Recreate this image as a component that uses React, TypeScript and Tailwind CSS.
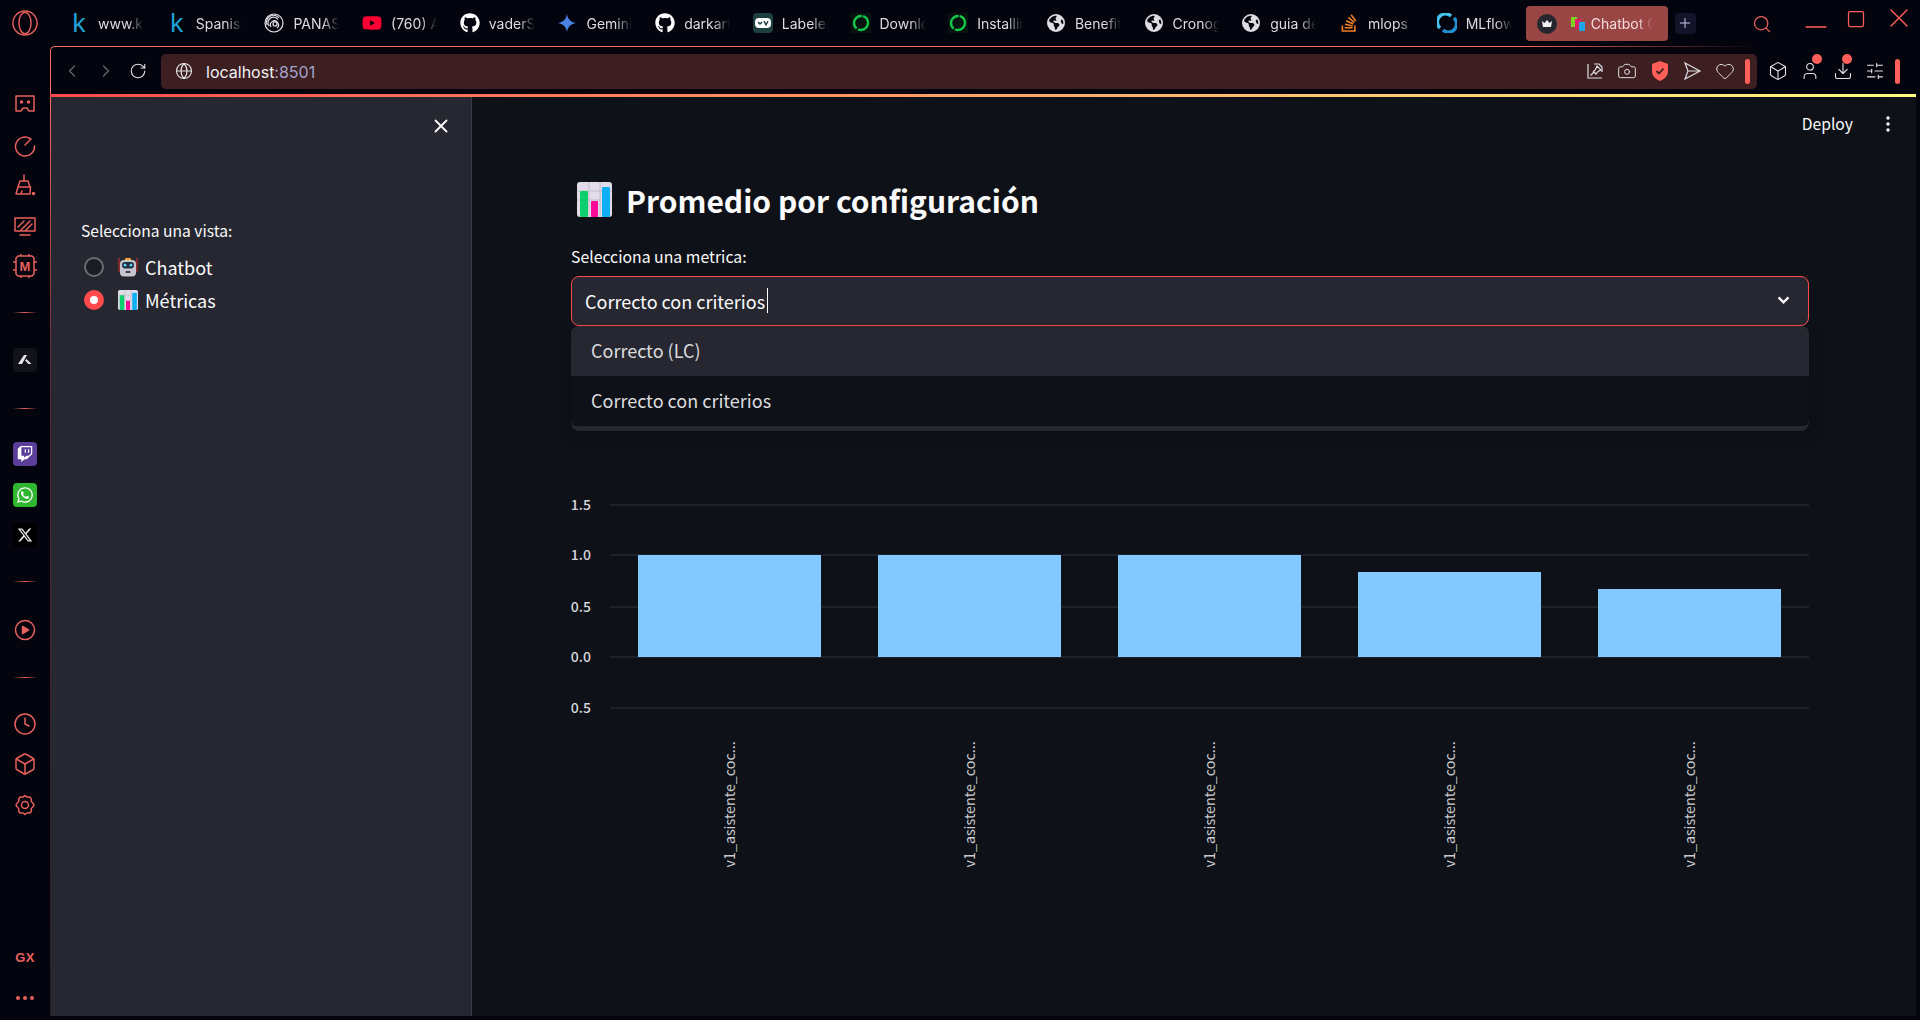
import type { ReactNode } from 'react';
import { Box, Camera, ChevronLeft, ChevronRight, Clock, Download, Globe, Heart, Minus, Plus, RotateCw, Search, SlidersHorizontal, Square, User, X } from 'lucide-react';
import { FaGithub, FaEarthAmericas, FaStackOverflow, FaTwitch, FaWhatsapp, FaXTwitter, FaYoutube } from 'react-icons/fa6';

const RED = '#e8605c';

function KaggleK() {
  return <span className="text-[26px] leading-5 font-medium text-[#20a3d8] [font-family:'Liberation_Sans',sans-serif]">k</span>;
}

function SpiralIcon() {
  return (
    <svg viewBox="0 0 20 20" className="w-5 h-5" fill="none" stroke="#e4e4e8" strokeWidth="1.2">
      <circle cx="10" cy="10" r="9" />
      <path d="M3 12a7 7 0 0 1 12-7M5 13a5.500 5.500 0 0 1 9-6.500M7 14a4 4 0 1 1 6 1" />
      <circle cx="11" cy="11" r="2" />
    </svg>
  );
}

function GeminiStar() {
  return (
    <svg viewBox="0 0 20 20" className="w-5 h-5">
      <path d="M10 1c.8 5 3.500 8 9 9-5.500 1-8.200 4-9 9-.8-5-3.500-8-9-9 5.500-1 8.200-4 9-9z" fill="#4a80e0" />
    </svg>
  );
}

function LabelIcon() {
  return (
    <div className="w-5 h-5 rounded-sm bg-[#1d3f3e] flex items-center justify-center">
      <svg viewBox="0 0 16 10" className="w-4 h-[10px]">
        <rect width="16" height="10" rx="4" fill="#fff" />
        <path d="M3 4l2 2 2-2M9 3l2 4 2-4" fill="none" stroke="#1d3f3e" strokeWidth="1.400" />
      </svg>
    </div>
  );
}

function Ring() {
  return (
    <div className="w-5 h-5 bg-[#07130f] flex items-center justify-center">
      <svg viewBox="0 0 20 20" className="w-5 h-5" fill="none">
        <circle cx="10" cy="10" r="7" stroke="#12c74a" strokeWidth="2.400" strokeDasharray="14 1.500 18 1" />
      </svg>
    </div>
  );
}

function MlflowIcon() {
  return (
    <svg viewBox="0 0 20 20" className="w-5 h-5" fill="none" strokeWidth="3.400">
      <path d="M3 15A8 8 0 0 1 14 3" stroke="#43c3ea" />
      <path d="M17 5a8 8 0 0 1-11 12" stroke="#1f8fd0" />
    </svg>
  );
}

function ChartEmoji({ className }: { className: string }) {
  return (
    <svg viewBox="0 0 35 35" className={className}>
      <rect width="35" height="35" rx="3" fill="#e2dbe8" />
      <path d="M0 9h35M0 18h35M12 0v35M23 0v35" stroke="#c2bccb" strokeWidth="1" />
      <rect x="3" y="9" width="8" height="26" rx="1" fill="#0bd06d" />
      <rect x="14" y="19" width="7" height="16" rx="1" fill="#fb0a9a" />
      <rect x="25" y="5" width="8" height="30" rx="1" fill="#0db0f4" />
    </svg>
  );
}

function RobotEmoji() {
  return (
    <svg viewBox="0 0 20 20" className="w-5 h-5">
      <path d="M1 1v14M19 1v14" stroke="#d8312f" strokeWidth="1" />
      <rect x="7" y="1" width="6" height="3" rx="1" fill="#f4a935" />
      <rect x="2" y="3" width="16" height="16.500" rx="4" fill="#c9c5cf" />
      <rect x="4" y="5" width="12" height="6.500" rx="3" fill="#20303f" />
      <circle cx="7" cy="8.200" r="1.400" fill="#5fd0f5" />
      <circle cx="13" cy="8.200" r="1.400" fill="#5fd0f5" />
      <rect x="7.500" y="14" width="5" height="2" rx="1" fill="#3a3a44" />
    </svg>
  );
}

const tabs: { icon: ReactNode; label: string }[] = [
  { icon: <KaggleK />, label: 'www.kaggle' },
  { icon: <KaggleK />, label: 'Spanish' },
  { icon: <SpiralIcon />, label: 'PANAS' },
  { icon: <FaYoutube className="w-5 h-5 text-[#ff0033]" />, label: '(760) A' },
  { icon: <FaGithub className="w-5 h-5 text-white" />, label: 'vaderSent' },
  { icon: <GeminiStar />, label: 'Gemini' },
  { icon: <FaGithub className="w-5 h-5 text-white" />, label: 'darkarts' },
  { icon: <LabelIcon />, label: 'Labeled' },
  { icon: <Ring />, label: 'Download' },
  { icon: <Ring />, label: 'Installing' },
  { icon: <FaEarthAmericas className="w-[18px] h-[18px] text-[#dedee2]" />, label: 'Benefits' },
  { icon: <FaEarthAmericas className="w-[18px] h-[18px] text-[#dedee2]" />, label: 'Cronogr' },
  { icon: <FaEarthAmericas className="w-[18px] h-[18px] text-[#dedee2]" />, label: 'guia de' },
  { icon: <FaStackOverflow className="w-5 h-5 text-[#f48024]" />, label: 'mlops' },
  { icon: <MlflowIcon />, label: 'MLflow' },
];

function Tab({ icon, label }: { icon: ReactNode; label: string }) {
  return (
    <div className="w-[97.7px] shrink-0 flex items-center gap-[9px] px-[10px]">
      <div className="w-5 h-5 shrink-0 flex items-center justify-center">{icon}</div>
      <span className="w-[46px] overflow-hidden whitespace-nowrap text-[14px] text-[#dcdce0] [mask-image:linear-gradient(to_right,black_65%,transparent)]">{label}</span>
    </div>
  );
}

function RailGlyph({ children }: { children: ReactNode }) {
  return (
    <svg viewBox="0 0 24 24" className="w-6 h-6" fill="none" stroke={RED} strokeWidth="1.500" strokeLinejoin="round" strokeLinecap="round">
      {children}
    </svg>
  );
}

function RailSlot({ h, children }: { h: string; children?: ReactNode }) {
  return <div className={`${h} w-full flex items-center justify-center shrink-0`}>{children}</div>;
}

function RailDivider() {
  return <div className="w-6 h-px bg-[linear-gradient(to_right,transparent,#e8605c,transparent)]" />;
}

function Rail() {
  return (
    <aside className="w-[50px] shrink-0 flex flex-col pt-[38px] pb-[2px]">
      <RailSlot h="h-[40.5px]">
        <RailGlyph>
          <path d="M3 4h18v15h-5l-2-3h-4l-2 3H3z" />
          <circle cx="8.500" cy="10" r="1" fill={RED} />
          <circle cx="15.500" cy="10" r="1" fill={RED} />
        </RailGlyph>
      </RailSlot>
      <RailSlot h="h-[40.5px]">
        <RailGlyph>
          <path d="M17 5.500A9.500 9.500 0 1 0 21.500 13" />
          <path d="M12 12l6-6" />
        </RailGlyph>
      </RailSlot>
      <RailSlot h="h-[40.5px]">
        <RailGlyph>
          <path d="M11 2v6M7 8h8l2 6H5zM5 14l-2 7h14l.5-7M8 21l1-3" />
          <circle cx="20.500" cy="20.500" r="1" fill={RED} />
        </RailGlyph>
      </RailSlot>
      <RailSlot h="h-[40.5px]">
        <RailGlyph>
          <path d="M2 4h20v13H2zM7 21h10M5 13l6-6M8 16l9-9M13 16l6-6" />
        </RailGlyph>
      </RailSlot>
      <RailSlot h="h-[40.5px]">
        <svg viewBox="0 0 24 24" className="w-6 h-6" fill="none" stroke={RED} strokeWidth="1.500">
          <path d="M5 2h14l2 2v16l-2 2H5l-2-2V4z" />
          <path d="M8 0v2M16 0v2M0 8h3M0 16h3M21 8h3M21 16h3M8 22v2M16 22v2" />
          <text x="12" y="17" textAnchor="middle" fontSize="13" fontWeight="700" fill={RED} stroke="none" fontFamily="'Liberation Sans', sans-serif">M</text>
        </svg>
      </RailSlot>
      <RailSlot h="h-[51.5px]"><RailDivider /></RailSlot>
      <RailSlot h="h-[44px]">
        <div className="w-6 h-[24px] rounded bg-[#12121b] flex items-center justify-center">
          <svg viewBox="0 0 16 16" className="w-4 h-4" fill="#e4e4e8">
            <path d="M7 3h3l-5 9H1zM9.500 7l5 5h-3l-3.500-3.500z" />
          </svg>
        </div>
      </RailSlot>
      <RailSlot h="h-[52px]"><RailDivider /></RailSlot>
      <RailSlot h="h-[40.5px]">
        <div className="w-6 h-6 rounded bg-[#5a3e9a] flex items-center justify-center">
          <FaTwitch className="w-4 h-4 text-white" />
        </div>
      </RailSlot>
      <RailSlot h="h-[40.5px]">
        <div className="w-6 h-6 rounded bg-[#2fb52f] flex items-center justify-center">
          <FaWhatsapp className="w-[18px] h-[18px] text-white" />
        </div>
      </RailSlot>
      <RailSlot h="h-[40.5px]">
        <div className="w-6 h-6 rounded bg-black flex items-center justify-center">
          <FaXTwitter className="w-4 h-4 text-[#e4e4e8]" />
        </div>
      </RailSlot>
      <RailSlot h="h-[52px]"><RailDivider /></RailSlot>
      <RailSlot h="h-[44px]">
        <RailGlyph>
          <circle cx="12" cy="12" r="9.500" />
          <path d="M9.500 8.500l6 3.500-6 3.500z" fill={RED} />
        </RailGlyph>
      </RailSlot>
      <RailSlot h="h-[52px]"><RailDivider /></RailSlot>
      <RailSlot h="h-[40.5px]"><Clock className="w-6 h-6 text-[#e8605c]" strokeWidth={1.5} /></RailSlot>
      <RailSlot h="h-[40.5px]"><Box className="w-6 h-6 text-[#e8605c]" strokeWidth={1.5} /></RailSlot>
      <RailSlot h="h-[40.5px]">
        <RailGlyph>
          <path d="M12 2.500c1.500 1.800 3 2 5 1.500 1 .8 1.500 3 1.300 4.500 1.300 1 2.200 2.200 2.700 3.500-.5 1.300-1.400 2.500-2.700 3.500.2 1.500-.3 3.700-1.300 4.500-2-.5-3.500-.3-5 1.500-1.500-1.800-3-2-5-1.500-1-.8-1.500-3-1.300-4.500C4.400 14.500 3.500 13.300 3 12c.5-1.300 1.400-2.500 2.700-3.500C5.500 7 6 4.800 7 4c2 .5 3.500.3 5-1.500z" />
          <circle cx="12" cy="12" r="3.500" />
        </RailGlyph>
      </RailSlot>
      <div className="flex-1" />
      <RailSlot h="h-10">
        <span className="text-[13px] font-bold tracking-wide text-[#e8605c] [font-family:'Liberation_Sans',sans-serif]">GX</span>
      </RailSlot>
      <RailSlot h="h-10">
        <div className="flex gap-[3px]">
          <div className="w-1 h-1 rounded-full bg-[#e8605c]" />
          <div className="w-1 h-1 rounded-full bg-[#e8605c]" />
          <div className="w-1 h-1 rounded-full bg-[#e8605c]" />
        </div>
      </RailSlot>
    </aside>
  );
}

function TabStrip() {
  return (
    <header className="h-[46px] shrink-0 flex items-center [font-family:Inter,sans-serif]">
      <div className="w-[59px] shrink-0 flex items-center pl-[12px]">
        <svg viewBox="0 0 28 28" className="w-[26px] h-[26px]" fill="none" stroke={RED} strokeWidth="1.500">
          <ellipse cx="14" cy="14" rx="13" ry="13" />
          <ellipse cx="14" cy="14" rx="6.500" ry="11.500" />
        </svg>
      </div>
      {tabs.map((t, i) => <Tab key={i} icon={t.icon} label={t.label} />)}
      <div className="ml-[1.500px] w-[142px] h-[35px] mt-[1px] shrink-0 rounded-[4px] bg-[#9a4645] flex items-center pl-[11px]">
        <div className="w-5 h-5 shrink-0 rounded-full bg-[#26262f] flex items-center justify-center">
          <svg viewBox="0 0 12 12" className="w-3 h-3" fill="#f2f2f4"><path d="M1 3l2.500 2L6 2l2.500 3L11 3l-1 6H2z" /></svg>
        </div>
        <div className="ml-[14px] w-[14px] h-[14px] shrink-0"><ChartTabIcon /></div>
        <span className="ml-[6px] w-[62px] overflow-hidden whitespace-nowrap text-[14px] text-[#f2dcdb] [mask-image:linear-gradient(to_right,black_75%,transparent)]">Chatbot Cocina</span>
      </div>
      <div className="ml-[7px] w-[21px] h-[21px] rounded bg-[#13132a] flex items-center justify-center">
        <Plus className="w-4 h-4 text-[#c9c9ef]" strokeWidth={1.5} />
      </div>
      <Search className="ml-[56px] mt-[2px] w-5 h-5 text-[#e8605c]" strokeWidth={1.5} />
      <Minus className="ml-[27px] mt-[8px] w-[34px] h-[34px] text-[#ff5f58]" strokeWidth={1} />
      <Square className="ml-[13px] -mt-[8px] w-5 h-5 text-[#ff5f58]" strokeWidth={1.5} />
      <X className="ml-[17px] -mt-[10px] w-8 h-8 text-[#ff5f58]" strokeWidth={1} />
    </header>
  );
}

function ChartTabIcon() {
  return (
    <svg viewBox="0 0 14 14" className="w-[14px] h-[14px]">
      <rect x="0" y="0" width="6" height="10" fill="#7ed321" />
      <rect x="4" y="2" width="6" height="10" fill="#e01b6a" />
      <rect x="8" y="5" width="6" height="9" fill="#1ea7e8" />
    </svg>
  );
}

function Toolbar() {
  return (
    <div className="relative h-[48px] pt-[1px] shrink-0 flex items-center border-t border-l border-[#ff6a63] rounded-tl-[5px] [font-family:Inter,sans-serif]">
      <div className="absolute -top-px right-0 w-[400px] h-px bg-[linear-gradient(to_right,transparent,#04040f_60%)]" />
      <ChevronLeft className="ml-[11px] w-5 h-5 text-[#66666e]" strokeWidth={1.5} />
      <ChevronRight className="ml-[14px] w-5 h-5 text-[#66666e]" strokeWidth={1.5} />
      <RotateCw className="ml-[13px] w-[18px] h-[18px] text-[#dedee2]" strokeWidth={1.5} />
      <div className="ml-[14px] w-[1596px] h-[35px] rounded-[5px] bg-[#3d1f21] flex items-center pl-[14px] pr-[7px]">
        <Globe className="w-[18px] h-[18px] text-[#e4e4e8]" strokeWidth={1.5} />
        <span className="ml-[13px] pt-[1px] text-[16px] text-[#f2f2f4]">localhost<span className="text-[#a3a3cc]">:8501</span></span>
        <div className="flex-1" />
        <svg viewBox="0 0 20 20" className="w-5 h-5" fill="none" stroke="#dedee2" strokeWidth="1.200">
          <path d="M3 3v14h14M9 3h5l3 3v5" />
          <path d="M12 5l4 4-3 1.500-2 2.500-2.500-2.500 2-2zM9 11l-3.500 3.500" />
        </svg>
        <Camera className="ml-[12px] w-5 h-5 text-[#dedee2]" strokeWidth={1.2} />
        <svg viewBox="0 0 20 22" className="ml-[13px] w-5 h-[22px]">
          <path d="M10 1l8 3v7c0 5-3.500 8-8 10-4.500-2-8-5-8-10V4z" fill="#ff5f58" />
          <path d="M6.500 11l2.500 2.500 4.500-5" fill="none" stroke="#3d1f21" strokeWidth="1.800" />
        </svg>
        <svg viewBox="0 0 20 20" className="ml-[12px] w-5 h-5" fill="none" stroke="#dedee2" strokeWidth="1.200">
          <path d="M3 2l15 8-15 8 3-8zM6 10h12" />
        </svg>
        <Heart className="ml-[13px] w-5 h-5 text-[#dedee2]" strokeWidth={1.2} />
        <div className="ml-[10px] w-[5px] h-[25px] rounded-sm bg-[#ff5f58]" />
      </div>
      <Box className="ml-[11px] w-5 h-5 text-[#e4e4e8]" strokeWidth={1.3} />
      <div className="relative ml-[12px]">
        <User className="w-5 h-5 text-[#e4e4e8]" strokeWidth={1.3} />
        <div className="absolute -top-[7px] left-[12px] w-[10px] h-[10px] rounded-full bg-[#ff5f58]" />
      </div>
      <div className="relative ml-[13px]">
        <Download className="w-5 h-5 text-[#e4e4e8]" strokeWidth={1.3} />
        <div className="absolute -top-[7px] left-[9px] w-[10px] h-[10px] rounded-full bg-[#ff5f58]" />
      </div>
      <SlidersHorizontal className="ml-[12px] w-5 h-5 text-[#e4e4e8]" strokeWidth={1.3} />
      <div className="ml-[10px] w-[5px] h-[25px] rounded-sm bg-[#ff5f58]" />
    </div>
  );
}

function Sidebar() {
  return (
    <aside className="w-[421px] shrink-0 bg-[#262730] border-r border-[#3a3b45] [font-family:'Noto_Sans_CJK_SC',sans-serif] text-[#fafafa]">
      <div className="flex justify-end pt-[18px] pr-[19px] h-[40px]">
        <X className="w-[22px] h-[22px] text-[#fafafa]" strokeWidth={2} />
      </div>
      <p className="mt-[81px] ml-[30px] text-[15.6px] leading-[24px]">Selecciona una vista:</p>
      <div className="mt-[15px] ml-[33px] flex flex-col gap-[13px]">
        <div className="flex items-center h-[20px]">
          <div className="w-5 h-5 rounded-full border-2 border-[#6b6c74] bg-[#1c1d24]" />
          <div className="ml-[14px]"><RobotEmoji /></div>
          <span className="ml-[7px] text-[18px] leading-[24px]">Chatbot</span>
        </div>
        <div className="flex items-center h-[20px]">
          <div className="w-5 h-5 rounded-full bg-[#ff4b4b] flex items-center justify-center">
            <div className="w-2 h-2 rounded-full bg-white" />
          </div>
          <div className="ml-[14px]"><ChartEmoji className="w-5 h-5" /></div>
          <span className="ml-[7px] text-[18px] leading-[24px]">Métricas</span>
        </div>
      </div>
    </aside>
  );
}

const gridLines = [
  { label: '1.5', y: 15 },
  { label: '1.0', y: 65 },
  { label: '0.5', y: 117 },
  { label: '0.0', y: 167 },
  { label: '0.5', y: 218 },
];

const bars = [
  { x: 67, top: 65 },
  { x: 307, top: 65 },
  { x: 547, top: 65 },
  { x: 787, top: 82 },
  { x: 1027, top: 99 },
];

function Chart() {
  return (
    <svg viewBox="0 0 1238 400" className="w-[1238px] h-[400px]">
      {gridLines.map((g, i) => (
        <g key={i}>
          <line x1="39" x2="1238" y1={g.y} y2={g.y} stroke="#262730" strokeWidth="1.500" />
          <text x="20" y={g.y + 5} textAnchor="end" fontSize="14" fontWeight="500" fill="#d5d6da" fontFamily="'Noto Sans CJK SC', sans-serif">{g.label}</text>
        </g>
      ))}
      {bars.map((b, i) => (
        <g key={i}>
          <rect x={b.x} y={b.top} width="183" height={167 - b.top} fill="#83c9ff" />
          <text transform={`translate(${b.x + 97} 377.5) rotate(-90)`} fontSize="14.3" fill="#c9cad0" fontFamily="'Noto Sans CJK SC', sans-serif">v1_asistente_coc...</text>
        </g>
      ))}
    </svg>
  );
}

function Main() {
  return (
    <main className="relative flex-1 bg-[#0e1117] pl-[99px] pr-[107px] [font-family:'Noto_Sans_CJK_SC',sans-serif] text-[#fafafa]">
      <div className="absolute top-[15px] right-[26px] flex items-center">
        <span className="text-[15.7px] leading-[24px]">Deploy</span>
        <svg viewBox="0 0 4 16" className="ml-[33px] w-1 h-4" fill="#fafafa">
          <circle cx="2" cy="2" r="1.700" /><circle cx="2" cy="8" r="1.700" /><circle cx="2" cy="14" r="1.700" />
        </svg>
      </div>
      <div className="flex items-center pl-[6px] pt-[82.5px]">
        <ChartEmoji className="w-[35px] h-[35px]" />
        <h1 className="ml-[14px] text-[30px] leading-[40px] font-semibold">Promedio por configuración</h1>
      </div>
      <p className="mt-[25px] text-[15.8px] leading-[24px]">Selecciona una metrica:</p>
      <div className="relative mt-[7px]">
        <div className="h-[50px] rounded-[8px] border border-[#ff4b4b] bg-[#262730] flex items-center pl-[13px] pr-[18px]">
          <span className="text-[18px] leading-[24px]">Correcto con criterios</span>
          <div className="ml-[2px] w-px h-[25px] bg-white" />
          <div className="flex-1" />
          <svg viewBox="0 0 14 10" className="w-[13px] h-[9px]" fill="none" stroke="#fafafa" strokeWidth="2.500">
            <path d="M1.500 1.500L7 7l5.500-5.500" />
          </svg>
        </div>
        <div className="absolute top-[50px] left-0 right-0 z-10 rounded-[8px] bg-[#262730] pb-[5px] overflow-hidden shadow-[0_4px_16px_rgba(0,0,0,0.18)] text-[18px] text-[#dcdcdf]">
          <div className="h-[50px] bg-[#262730] flex items-center pl-[20px]">Correcto (LC)</div>
          <div className="h-[50px] bg-[#0e1117] flex items-center pl-[20px] rounded-b-[6px]">Correcto con criterios</div>
        </div>
      </div>
      <div className="mt-[164px]">
        <Chart />
      </div>
    </main>
  );
}

export default function App() {
  return (
    <div className="w-[1920px] h-[1020px] overflow-hidden bg-[#04040f] flex flex-col">
      <TabStrip />
      <div className="flex-1 flex min-h-0">
        <Rail />
        <div className="flex-1 flex flex-col min-w-0 mr-[4px] mb-[4px]">
          <Toolbar />
          <div className="h-[3px] shrink-0 bg-[linear-gradient(to_right,#ff4b4b,#fffd80)]" />
          <div className="flex-1 flex min-h-0">
            <div className="w-px shrink-0 bg-[linear-gradient(to_bottom,#ff6a63,#5a2a32_30%,#2a1a22)]" />
            <Sidebar />
            <Main />
          </div>
        </div>
      </div>
    </div>
  );
}
